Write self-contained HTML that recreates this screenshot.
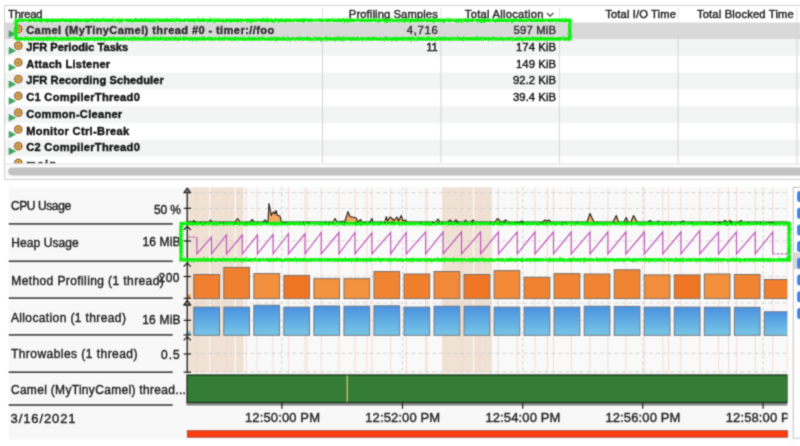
<!DOCTYPE html><html><head><meta charset="utf-8"><style>html,body{margin:0;padding:0;background:#fff;width:800px;height:446px;overflow:hidden}</style></head><body><svg width="800" height="446" viewBox="0 0 800 446" style="display:block;font-family:'Liberation Sans', sans-serif">
<defs><filter id="rough" x="-2%" y="-30%" width="104%" height="160%"><feTurbulence type="fractalNoise" baseFrequency="1.1" numOctaves="2" seed="7"/><feDisplacementMap in="SourceGraphic" scale="3.2"/></filter><linearGradient id="bg1" x1="0" y1="0" x2="0" y2="1"><stop offset="0" stop-color="#4a92e0"/><stop offset="1" stop-color="#78c6e6"/></linearGradient><radialGradient id="gear" cx="0.5" cy="0.5" r="0.5"><stop offset="0.25" stop-color="#9a948c"/><stop offset="0.38" stop-color="#d69a3a"/><stop offset="0.7" stop-color="#f0b83a"/><stop offset="1" stop-color="#b07030"/></radialGradient></defs>
<filter id="gb" x="0" y="0" width="800" height="446" filterUnits="userSpaceOnUse" color-interpolation-filters="sRGB"><feConvolveMatrix order="3" kernelMatrix="1 3 1 3 12 3 1 3 1" divisor="28" edgeMode="duplicate"/></filter>
<g filter="url(#gb)">
<rect x="0" y="0" width="800" height="446" fill="#ffffff"/>
<rect x="4.5" y="5.5" width="900" height="174" fill="#ffffff" stroke="#d0d0d0" stroke-width="1"/>
<clipPath id="tclip"><rect x="5" y="22" width="800" height="141.6"/></clipPath>
<g clip-path="url(#tclip)">
<rect x="5" y="22.50" width="800" height="16.75" fill="#d9d9d9"/>
<rect x="5" y="39.25" width="800" height="16.75" fill="#f3f4f4"/>
<rect x="5" y="56.00" width="800" height="16.75" fill="#ffffff"/>
<rect x="5" y="72.75" width="800" height="16.75" fill="#f3f4f4"/>
<rect x="5" y="89.50" width="800" height="16.75" fill="#ffffff"/>
<rect x="5" y="106.25" width="800" height="16.75" fill="#f3f4f4"/>
<rect x="5" y="123.00" width="800" height="16.75" fill="#ffffff"/>
<rect x="5" y="139.75" width="800" height="16.75" fill="#f3f4f4"/>
<rect x="5" y="156.50" width="800" height="16.75" fill="#ffffff"/>
<rect x="322.0" y="22" width="1" height="142" fill="#d4d4d4"/>
<rect x="440.5" y="22" width="1" height="142" fill="#d4d4d4"/>
<rect x="558.8" y="22" width="1" height="142" fill="#d4d4d4"/>
<rect x="677.6" y="22" width="1" height="142" fill="#d4d4d4"/>
<rect x="796.4" y="22" width="1" height="142" fill="#d4d4d4"/>
<path d="M8.9 30.50 L15.8 34.00 L8.9 37.50 Z" fill="#3ea55e" stroke="#3ea55e" stroke-width="0.4" stroke-linejoin="round"/>
<polygon points="23.00,28.90 22.05,30.12 22.10,31.66 20.62,32.09 19.75,33.37 18.30,32.85 16.85,33.37 15.98,32.09 14.50,31.66 14.55,30.12 13.60,28.90 14.55,27.68 14.50,26.14 15.98,25.71 16.85,24.43 18.30,24.95 19.75,24.43 20.62,25.71 22.10,26.14 22.05,27.68" fill="#8a5234"/>
<circle cx="18.3" cy="28.90" r="3.10" fill="#eeb43a"/>
<circle cx="18.3" cy="28.90" r="1.97" fill="#c48a3a"/>
<circle cx="18.3" cy="28.90" r="1.32" fill="#9a9592"/>
<text x="26.2" y="34.10" font-size="11.1" font-weight="700" fill="#2e2e2e" text-anchor="start" textLength="248" lengthAdjust="spacing" stroke="#2e2e2e" stroke-width="0.4">Camel (MyTinyCamel) thread #0 - timer://foo</text>
<text x="437.8" y="34.10" font-size="11.3" font-weight="400" fill="#2e2e2e" text-anchor="end" textLength="31" lengthAdjust="spacing" stroke="#2e2e2e" stroke-width="0.4">4,716</text>
<text x="556" y="34.10" font-size="11.3" font-weight="400" fill="#2e2e2e" text-anchor="end" textLength="42.5" lengthAdjust="spacing" stroke="#2e2e2e" stroke-width="0.4">597 MiB</text>
<path d="M8.9 47.25 L15.8 50.75 L8.9 54.25 Z" fill="#3ea55e" stroke="#3ea55e" stroke-width="0.4" stroke-linejoin="round"/>
<polygon points="23.00,45.65 22.05,46.87 22.10,48.41 20.62,48.84 19.75,50.12 18.30,49.60 16.85,50.12 15.98,48.84 14.50,48.41 14.55,46.87 13.60,45.65 14.55,44.43 14.50,42.89 15.98,42.46 16.85,41.18 18.30,41.70 19.75,41.18 20.62,42.46 22.10,42.89 22.05,44.43" fill="#8a5234"/>
<circle cx="18.3" cy="45.65" r="3.10" fill="#eeb43a"/>
<circle cx="18.3" cy="45.65" r="1.97" fill="#c48a3a"/>
<circle cx="18.3" cy="45.65" r="1.32" fill="#9a9592"/>
<text x="26.2" y="50.85" font-size="11.1" font-weight="700" fill="#111111" text-anchor="start" textLength="102" lengthAdjust="spacing" stroke="#111111" stroke-width="0.4">JFR Periodic Tasks</text>
<text x="437.8" y="50.85" font-size="11.3" font-weight="400" fill="#111111" text-anchor="end" textLength="11.5" lengthAdjust="spacing" stroke="#111111" stroke-width="0.4">11</text>
<text x="556" y="50.85" font-size="11.3" font-weight="400" fill="#111111" text-anchor="end" textLength="40" lengthAdjust="spacing" stroke="#111111" stroke-width="0.4">174 KiB</text>
<path d="M8.9 64.00 L15.8 67.50 L8.9 71.00 Z" fill="#3ea55e" stroke="#3ea55e" stroke-width="0.4" stroke-linejoin="round"/>
<polygon points="23.00,62.40 22.05,63.62 22.10,65.16 20.62,65.59 19.75,66.87 18.30,66.35 16.85,66.87 15.98,65.59 14.50,65.16 14.55,63.62 13.60,62.40 14.55,61.18 14.50,59.64 15.98,59.21 16.85,57.93 18.30,58.45 19.75,57.93 20.62,59.21 22.10,59.64 22.05,61.18" fill="#8a5234"/>
<circle cx="18.3" cy="62.40" r="3.10" fill="#eeb43a"/>
<circle cx="18.3" cy="62.40" r="1.97" fill="#c48a3a"/>
<circle cx="18.3" cy="62.40" r="1.32" fill="#9a9592"/>
<text x="26.2" y="67.60" font-size="11.1" font-weight="700" fill="#111111" text-anchor="start" textLength="84" lengthAdjust="spacing" stroke="#111111" stroke-width="0.4">Attach Listener</text>
<text x="556" y="67.60" font-size="11.3" font-weight="400" fill="#111111" text-anchor="end" textLength="40" lengthAdjust="spacing" stroke="#111111" stroke-width="0.4">149 KiB</text>
<path d="M8.9 80.75 L15.8 84.25 L8.9 87.75 Z" fill="#3ea55e" stroke="#3ea55e" stroke-width="0.4" stroke-linejoin="round"/>
<polygon points="23.00,79.15 22.05,80.37 22.10,81.91 20.62,82.34 19.75,83.62 18.30,83.10 16.85,83.62 15.98,82.34 14.50,81.91 14.55,80.37 13.60,79.15 14.55,77.93 14.50,76.39 15.98,75.96 16.85,74.68 18.30,75.20 19.75,74.68 20.62,75.96 22.10,76.39 22.05,77.93" fill="#8a5234"/>
<circle cx="18.3" cy="79.15" r="3.10" fill="#eeb43a"/>
<circle cx="18.3" cy="79.15" r="1.97" fill="#c48a3a"/>
<circle cx="18.3" cy="79.15" r="1.32" fill="#9a9592"/>
<text x="26.2" y="84.35" font-size="11.1" font-weight="700" fill="#111111" text-anchor="start" textLength="137.6" lengthAdjust="spacing" stroke="#111111" stroke-width="0.4">JFR Recording Scheduler</text>
<text x="556" y="84.35" font-size="11.3" font-weight="400" fill="#111111" text-anchor="end" textLength="43" lengthAdjust="spacing" stroke="#111111" stroke-width="0.4">92.2 KiB</text>
<path d="M8.9 97.50 L15.8 101.00 L8.9 104.50 Z" fill="#3ea55e" stroke="#3ea55e" stroke-width="0.4" stroke-linejoin="round"/>
<polygon points="23.00,95.90 22.05,97.12 22.10,98.66 20.62,99.09 19.75,100.37 18.30,99.85 16.85,100.37 15.98,99.09 14.50,98.66 14.55,97.12 13.60,95.90 14.55,94.68 14.50,93.14 15.98,92.71 16.85,91.43 18.30,91.95 19.75,91.43 20.62,92.71 22.10,93.14 22.05,94.68" fill="#8a5234"/>
<circle cx="18.3" cy="95.90" r="3.10" fill="#eeb43a"/>
<circle cx="18.3" cy="95.90" r="1.97" fill="#c48a3a"/>
<circle cx="18.3" cy="95.90" r="1.32" fill="#9a9592"/>
<text x="26.2" y="101.10" font-size="11.1" font-weight="700" fill="#111111" text-anchor="start" textLength="113.6" lengthAdjust="spacing" stroke="#111111" stroke-width="0.4">C1 CompilerThread0</text>
<text x="556" y="101.10" font-size="11.3" font-weight="400" fill="#111111" text-anchor="end" textLength="43" lengthAdjust="spacing" stroke="#111111" stroke-width="0.4">39.4 KiB</text>
<path d="M8.9 114.25 L15.8 117.75 L8.9 121.25 Z" fill="#3ea55e" stroke="#3ea55e" stroke-width="0.4" stroke-linejoin="round"/>
<polygon points="23.00,112.65 22.05,113.87 22.10,115.41 20.62,115.84 19.75,117.12 18.30,116.60 16.85,117.12 15.98,115.84 14.50,115.41 14.55,113.87 13.60,112.65 14.55,111.43 14.50,109.89 15.98,109.46 16.85,108.18 18.30,108.70 19.75,108.18 20.62,109.46 22.10,109.89 22.05,111.43" fill="#8a5234"/>
<circle cx="18.3" cy="112.65" r="3.10" fill="#eeb43a"/>
<circle cx="18.3" cy="112.65" r="1.97" fill="#c48a3a"/>
<circle cx="18.3" cy="112.65" r="1.32" fill="#9a9592"/>
<text x="26.2" y="117.85" font-size="11.1" font-weight="700" fill="#111111" text-anchor="start" textLength="96" lengthAdjust="spacing" stroke="#111111" stroke-width="0.4">Common-Cleaner</text>
<path d="M8.9 131.00 L15.8 134.50 L8.9 138.00 Z" fill="#3ea55e" stroke="#3ea55e" stroke-width="0.4" stroke-linejoin="round"/>
<polygon points="23.00,129.40 22.05,130.62 22.10,132.16 20.62,132.59 19.75,133.87 18.30,133.35 16.85,133.87 15.98,132.59 14.50,132.16 14.55,130.62 13.60,129.40 14.55,128.18 14.50,126.64 15.98,126.21 16.85,124.93 18.30,125.45 19.75,124.93 20.62,126.21 22.10,126.64 22.05,128.18" fill="#8a5234"/>
<circle cx="18.3" cy="129.40" r="3.10" fill="#eeb43a"/>
<circle cx="18.3" cy="129.40" r="1.97" fill="#c48a3a"/>
<circle cx="18.3" cy="129.40" r="1.32" fill="#9a9592"/>
<text x="26.2" y="134.60" font-size="11.1" font-weight="700" fill="#111111" text-anchor="start" textLength="103" lengthAdjust="spacing" stroke="#111111" stroke-width="0.4">Monitor Ctrl-Break</text>
<path d="M8.9 147.75 L15.8 151.25 L8.9 154.75 Z" fill="#3ea55e" stroke="#3ea55e" stroke-width="0.4" stroke-linejoin="round"/>
<polygon points="23.00,146.15 22.05,147.37 22.10,148.91 20.62,149.34 19.75,150.62 18.30,150.10 16.85,150.62 15.98,149.34 14.50,148.91 14.55,147.37 13.60,146.15 14.55,144.93 14.50,143.39 15.98,142.96 16.85,141.68 18.30,142.20 19.75,141.68 20.62,142.96 22.10,143.39 22.05,144.93" fill="#8a5234"/>
<circle cx="18.3" cy="146.15" r="3.10" fill="#eeb43a"/>
<circle cx="18.3" cy="146.15" r="1.97" fill="#c48a3a"/>
<circle cx="18.3" cy="146.15" r="1.32" fill="#9a9592"/>
<text x="26.2" y="151.35" font-size="11.1" font-weight="700" fill="#111111" text-anchor="start" textLength="113.6" lengthAdjust="spacing" stroke="#111111" stroke-width="0.4">C2 CompilerThread0</text>
<path d="M8.9 164.50 L15.8 168.00 L8.9 171.50 Z" fill="#3ea55e" stroke="#3ea55e" stroke-width="0.4" stroke-linejoin="round"/>
<polygon points="23.00,162.90 22.05,164.12 22.10,165.66 20.62,166.09 19.75,167.37 18.30,166.85 16.85,167.37 15.98,166.09 14.50,165.66 14.55,164.12 13.60,162.90 14.55,161.68 14.50,160.14 15.98,159.71 16.85,158.43 18.30,158.95 19.75,158.43 20.62,159.71 22.10,160.14 22.05,161.68" fill="#8a5234"/>
<circle cx="18.3" cy="162.90" r="3.10" fill="#eeb43a"/>
<circle cx="18.3" cy="162.90" r="1.97" fill="#c48a3a"/>
<circle cx="18.3" cy="162.90" r="1.32" fill="#9a9592"/>
<text x="26.2" y="168.10" font-size="11.1" font-weight="700" fill="#111111" text-anchor="start" textLength="30" lengthAdjust="spacing" stroke="#111111" stroke-width="0.4">main</text>
</g>
<rect x="5" y="6" width="900" height="16" fill="#ffffff"/>
<text x="8.1" y="17.8" font-size="11.2" font-weight="400" fill="#1a1a1a" text-anchor="start" textLength="34.4" lengthAdjust="spacing" stroke="#1a1a1a" stroke-width="0.4">Thread</text>
<text x="437.8" y="17.8" font-size="11.2" font-weight="400" fill="#1a1a1a" text-anchor="end" textLength="89" lengthAdjust="spacing" stroke="#1a1a1a" stroke-width="0.4">Profiling Samples</text>
<text x="543.4" y="17.8" font-size="11.2" font-weight="400" fill="#1a1a1a" text-anchor="end" textLength="78.6" lengthAdjust="spacing" stroke="#1a1a1a" stroke-width="0.4">Total Allocation</text>
<path d="M546.8 12.8 L550.1 16.1 L553.4 12.8" fill="none" stroke="#333" stroke-width="1.1"/>
<text x="675.9" y="17.8" font-size="11.2" font-weight="400" fill="#1a1a1a" text-anchor="end" textLength="70.6" lengthAdjust="spacing" stroke="#1a1a1a" stroke-width="0.4">Total I/O Time</text>
<text x="793.8" y="17.8" font-size="11.2" font-weight="400" fill="#1a1a1a" text-anchor="end" textLength="96.9" lengthAdjust="spacing" stroke="#1a1a1a" stroke-width="0.4">Total Blocked Time</text>
<rect x="322.0" y="8" width="1" height="13" fill="#dddddd"/>
<rect x="440.5" y="8" width="1" height="13" fill="#dddddd"/>
<rect x="558.8" y="8" width="1" height="13" fill="#dddddd"/>
<rect x="677.6" y="8" width="1" height="13" fill="#dddddd"/>
<rect x="796.4" y="8" width="1" height="13" fill="#dddddd"/>
<rect x="5" y="163.6" width="900" height="15.4" fill="#fbfbfb"/>
<rect x="5" y="163.5" width="900" height="1" fill="#e4e4e4"/>
<rect x="8.2" y="167.6" width="900" height="7.8" rx="3.9" fill="#c2c2c2"/>
<rect x="8.7" y="187.2" width="778.9" height="252.6" fill="#f8f8f8"/>
<rect x="187.3" y="187.5" width="600.3" height="217.5" fill="#f9f9f9"/>
<rect x="187.3" y="187.5" width="55.90" height="185" fill="#efe1d4"/>
<rect x="442.7" y="187.5" width="49.20" height="185" fill="#efe1d4"/>
<rect x="196.10" y="187.5" width="1.0" height="185" fill="#eedacd"/>
<rect x="211.00" y="187.5" width="1.0" height="185" fill="#eedacd"/>
<rect x="226.00" y="187.5" width="1.0" height="185" fill="#eedacd"/>
<rect x="241.80" y="187.5" width="1.0" height="185" fill="#eedacd"/>
<rect x="245.75" y="187.5" width="1.0" height="185" fill="#f6dcd0"/>
<rect x="256.40" y="187.5" width="1.0" height="185" fill="#f6dcd0"/>
<rect x="272.60" y="187.5" width="1.0" height="185" fill="#f6dcd0"/>
<rect x="288.00" y="187.5" width="1.0" height="185" fill="#f6dcd0"/>
<rect x="304.50" y="187.5" width="1.0" height="185" fill="#f6dcd0"/>
<rect x="306.40" y="187.5" width="1.0" height="185" fill="#f6dcd0"/>
<rect x="320.75" y="187.5" width="1.0" height="185" fill="#f6dcd0"/>
<rect x="338.50" y="187.5" width="1.0" height="185" fill="#f6dcd0"/>
<rect x="354.50" y="187.5" width="1.0" height="185" fill="#f6dcd0"/>
<rect x="366.40" y="187.5" width="1.0" height="185" fill="#f6dcd0"/>
<rect x="371.40" y="187.5" width="1.0" height="185" fill="#f6dcd0"/>
<rect x="390.10" y="187.5" width="1.0" height="185" fill="#f6dcd0"/>
<rect x="405.75" y="187.5" width="1.0" height="185" fill="#f6dcd0"/>
<rect x="425.10" y="187.5" width="1.0" height="185" fill="#f6dcd0"/>
<rect x="426.75" y="187.5" width="1.0" height="185" fill="#f6dcd0"/>
<rect x="442.60" y="187.5" width="1.0" height="185" fill="#eedacd"/>
<rect x="461.30" y="187.5" width="1.0" height="185" fill="#eedacd"/>
<rect x="479.60" y="187.5" width="1.0" height="185" fill="#eedacd"/>
<rect x="497.90" y="187.5" width="1.0" height="185" fill="#f6dcd0"/>
<rect x="516.75" y="187.5" width="1.0" height="185" fill="#f6dcd0"/>
<rect x="534.50" y="187.5" width="1.0" height="185" fill="#f6dcd0"/>
<rect x="547.00" y="187.5" width="1.0" height="185" fill="#f6dcd0"/>
<rect x="553.00" y="187.5" width="1.0" height="185" fill="#f6dcd0"/>
<rect x="570.75" y="187.5" width="1.0" height="185" fill="#f6dcd0"/>
<rect x="589.50" y="187.5" width="1.0" height="185" fill="#f6dcd0"/>
<rect x="607.40" y="187.5" width="1.0" height="185" fill="#f6dcd0"/>
<rect x="625.40" y="187.5" width="1.0" height="185" fill="#f6dcd0"/>
<rect x="643.90" y="187.5" width="1.0" height="185" fill="#f6dcd0"/>
<rect x="662.25" y="187.5" width="1.0" height="185" fill="#f6dcd0"/>
<rect x="668.00" y="187.5" width="1.0" height="185" fill="#f6dcd0"/>
<rect x="680.50" y="187.5" width="1.0" height="185" fill="#f6dcd0"/>
<rect x="699.25" y="187.5" width="1.0" height="185" fill="#f6dcd0"/>
<rect x="718.00" y="187.5" width="1.0" height="185" fill="#f6dcd0"/>
<rect x="728.00" y="187.5" width="1.0" height="185" fill="#f6dcd0"/>
<rect x="736.00" y="187.5" width="1.0" height="185" fill="#f6dcd0"/>
<rect x="754.75" y="187.5" width="1.0" height="185" fill="#f6dcd0"/>
<rect x="772.25" y="187.5" width="1.0" height="185" fill="#f6dcd0"/>
<rect x="786.80" y="187.5" width="1.0" height="185" fill="#f6dcd0"/>
<rect x="209.25" y="187.5" width="1.3" height="185" fill="#fbf8f5"/>
<rect x="234.75" y="187.5" width="1.3" height="185" fill="#fbf8f5"/>
<rect x="472.95000000000005" y="187.5" width="1.3" height="185" fill="#fbf8f5"/>
<line x1="281.9" y1="187.5" x2="281.9" y2="372.5" stroke="#cdcdcd" stroke-width="0.9" stroke-dasharray="3,3"/>
<line x1="402.5" y1="187.5" x2="402.5" y2="372.5" stroke="#cdcdcd" stroke-width="0.9" stroke-dasharray="3,3"/>
<line x1="522.75" y1="187.5" x2="522.75" y2="372.5" stroke="#cdcdcd" stroke-width="0.9" stroke-dasharray="3,3"/>
<line x1="642.75" y1="187.5" x2="642.75" y2="372.5" stroke="#cdcdcd" stroke-width="0.9" stroke-dasharray="3,3"/>
<line x1="763.1" y1="187.5" x2="763.1" y2="372.5" stroke="#cdcdcd" stroke-width="0.9" stroke-dasharray="3,3"/>
<line x1="187.3" y1="192.6" x2="787.6" y2="192.6" stroke="#d0d0d0" stroke-width="0.9" stroke-dasharray="4,3"/>
<line x1="187.3" y1="208.5" x2="787.6" y2="208.5" stroke="#d0d0d0" stroke-width="0.9" stroke-dasharray="4,3"/>
<line x1="187.3" y1="241.0" x2="787.6" y2="241.0" stroke="#d0d0d0" stroke-width="0.9" stroke-dasharray="4,3"/>
<line x1="187.3" y1="276.6" x2="787.6" y2="276.6" stroke="#d0d0d0" stroke-width="0.9" stroke-dasharray="4,3"/>
<line x1="187.3" y1="303.0" x2="787.6" y2="303.0" stroke="#d0d0d0" stroke-width="0.9" stroke-dasharray="4,3"/>
<line x1="187.3" y1="320.2" x2="787.6" y2="320.2" stroke="#d0d0d0" stroke-width="0.9" stroke-dasharray="4,3"/>
<line x1="187.3" y1="353.3" x2="787.6" y2="353.3" stroke="#d0d0d0" stroke-width="0.9" stroke-dasharray="4,3"/>
<line x1="187.3" y1="372.0" x2="787.6" y2="372.0" stroke="#d0d0d0" stroke-width="0.9" stroke-dasharray="4,3"/>
<polygon points="187.3,222.5 187.5,222 193,221.5 194,220.5 195,222 209,222 210.6,220 212,222 235,222 237.5,218.5 240,222 250,222 252.5,219.5 254,222 263,222 265,220 267,222 268,221 269,203.5 271.25,215.4 272.5,213 274,212 275,214 276,210.5 277.5,215.5 280,216 281.25,222 282,222 333,222 335,218.5 337,222 345,221 348,211.6 350,216.5 356.25,218 357.5,222 359,221 360.6,219.5 362,222 370,222 371.9,218.5 373,222 385,222 386.25,216.6 387.5,221 390,217 392.5,219 394,220.5 396.9,217 398.5,221 401.25,215.5 403,221 405.6,220 407,222 436,222 438,219 440,222 448,222 450,220 452,222 454,222 456,220 458,222 464,222 465.6,220 467,222 471,222 473,220 475,222 495,222 497.5,218.5 500,221 503,222 505.6,220 508,222 520,222 521.9,221 523,222 543,222 545,220 547,221 548.75,220 551,222 587,222 590,213.5 592.5,219 594,222 613,222 616.25,215.5 618.5,222 624,222 626.25,217.5 628,222 631,222 633.5,215.5 635.6,219 637,222 648,222 650,220.5 652,222 657,222 658.75,221 660,222 681,222 683,221 685,222 723,222 725,220.5 727,222 728,222 730,220.5 732,222 739,222 741,220.5 743,222 787.5,222 787.5,222.5" fill="#f4a865" stroke="#1e1e1e" stroke-width="1.1" stroke-linejoin="round"/>
<line x1="188.5" y1="237.2" x2="196.9" y2="237.2" stroke="#c058bc" stroke-width="1.2" stroke-dasharray="2.5,1.5"/>
<path d="M196.9 237.2 L196.9 253.8 L211.5 237.2 L211.5 253.8 L226.5 235 L226.5 253.8 L242.3 235 L242.3 253.8 L257.5 235 L257.5 253.8 L273.1 234.4 L273.1 253.8 L288.5 233.75 L288.5 253.8 L305 233.75 L305 253.8 L321.25 232.5 L321.25 253.8 L339 232.5 L339 253.8 L355 232.5 L355 253.8 L371.9 233 L371.9 253.8 L390.6 232.5 L390.6 253.8 L406.25 232.5 L406.25 253.8 L425.6 232 L425.6 253.8 L443.1 232 L443.1 253.8 L461.5 232 L461.5 253.8 L480.6 232 L480.6 253.8 L498.5 232 L498.5 253.8 L517.25 232 L517.25 253.8 L535 232 L535 253.8 L553.5 232 L553.5 253.8 L571.25 232 L571.25 253.8 L590 232 L590 253.8 L607.9 232 L607.9 253.8 L625.9 232 L625.9 253.8 L644.4 232 L644.4 253.8 L662.75 232 L662.75 253.8 L681 232 L681 253.8 L699.75 230.6 L699.75 253.8 L718.5 232 L718.5 253.8 L736.5 232 L736.5 253.8 L755.25 232 L755.25 253.8 L772.75 232 L772.75 253.8" fill="none" stroke="#c058bc" stroke-width="1.2" stroke-linejoin="miter"/>
<line x1="772.75" y1="253.8" x2="787.5" y2="253.8" stroke="#c058bc" stroke-width="1.2" stroke-dasharray="2.5,1.5"/>
<clipPath id="pclip"><rect x="187.3" y="180" width="600.3" height="266"/></clipPath>
<g clip-path="url(#pclip)">
<rect x="193.80" y="274.5" width="25.7" height="24.10" fill="#f0802f" stroke="#7a716a" stroke-width="1"/>
<rect x="193.80" y="307.1" width="25.7" height="28.20" fill="url(#bg1)" stroke="#6f7780" stroke-width="1"/>
<rect x="223.83" y="267.4" width="25.7" height="31.20" fill="#f0802f" stroke="#7a716a" stroke-width="1"/>
<rect x="223.83" y="307.1" width="25.7" height="28.20" fill="url(#bg1)" stroke="#6f7780" stroke-width="1"/>
<rect x="253.86" y="273.6" width="25.7" height="25.00" fill="#f2903d" stroke="#7a716a" stroke-width="1"/>
<rect x="253.86" y="305.25" width="25.7" height="30.05" fill="url(#bg1)" stroke="#6f7780" stroke-width="1"/>
<rect x="283.89" y="275.4" width="25.7" height="23.20" fill="#ef7624" stroke="#7a716a" stroke-width="1"/>
<rect x="283.89" y="307.1" width="25.7" height="28.20" fill="url(#bg1)" stroke="#6f7780" stroke-width="1"/>
<rect x="313.92" y="278.6" width="25.7" height="20.00" fill="#f3923f" stroke="#7a716a" stroke-width="1"/>
<rect x="313.92" y="306" width="25.7" height="29.30" fill="url(#bg1)" stroke="#6f7780" stroke-width="1"/>
<rect x="343.95" y="278.6" width="25.7" height="20.00" fill="#f3923f" stroke="#7a716a" stroke-width="1"/>
<rect x="343.95" y="306.2" width="25.7" height="29.10" fill="url(#bg1)" stroke="#6f7780" stroke-width="1"/>
<rect x="373.98" y="271.5" width="25.7" height="27.10" fill="#f08432" stroke="#7a716a" stroke-width="1"/>
<rect x="373.98" y="305.8" width="25.7" height="29.50" fill="url(#bg1)" stroke="#6f7780" stroke-width="1"/>
<rect x="404.01" y="274" width="25.7" height="24.60" fill="#f07f2c" stroke="#7a716a" stroke-width="1"/>
<rect x="404.01" y="307.1" width="25.7" height="28.20" fill="url(#bg1)" stroke="#6f7780" stroke-width="1"/>
<rect x="434.04" y="271.5" width="25.7" height="27.10" fill="#f2893a" stroke="#7a716a" stroke-width="1"/>
<rect x="434.04" y="306.2" width="25.7" height="29.10" fill="url(#bg1)" stroke="#6f7780" stroke-width="1"/>
<rect x="464.07" y="274.5" width="25.7" height="24.10" fill="#ef7624" stroke="#7a716a" stroke-width="1"/>
<rect x="464.07" y="306.2" width="25.7" height="29.10" fill="url(#bg1)" stroke="#6f7780" stroke-width="1"/>
<rect x="494.10" y="270.6" width="25.7" height="28.00" fill="#f28a38" stroke="#7a716a" stroke-width="1"/>
<rect x="494.10" y="307.1" width="25.7" height="28.20" fill="url(#bg1)" stroke="#6f7780" stroke-width="1"/>
<rect x="524.13" y="277.3" width="25.7" height="21.30" fill="#f08230" stroke="#7a716a" stroke-width="1"/>
<rect x="524.13" y="307.1" width="25.7" height="28.20" fill="url(#bg1)" stroke="#6f7780" stroke-width="1"/>
<rect x="554.16" y="273.6" width="25.7" height="25.00" fill="#f08432" stroke="#7a716a" stroke-width="1"/>
<rect x="554.16" y="307.1" width="25.7" height="28.20" fill="url(#bg1)" stroke="#6f7780" stroke-width="1"/>
<rect x="584.19" y="274" width="25.7" height="24.60" fill="#f08432" stroke="#7a716a" stroke-width="1"/>
<rect x="584.19" y="306.2" width="25.7" height="29.10" fill="url(#bg1)" stroke="#6f7780" stroke-width="1"/>
<rect x="614.22" y="269.8" width="25.7" height="28.80" fill="#f08432" stroke="#7a716a" stroke-width="1"/>
<rect x="614.22" y="306.4" width="25.7" height="28.90" fill="url(#bg1)" stroke="#6f7780" stroke-width="1"/>
<rect x="644.25" y="274.9" width="25.7" height="23.70" fill="#f28d3b" stroke="#7a716a" stroke-width="1"/>
<rect x="644.25" y="307.1" width="25.7" height="28.20" fill="url(#bg1)" stroke="#6f7780" stroke-width="1"/>
<rect x="674.28" y="274.9" width="25.7" height="23.70" fill="#ef7624" stroke="#7a716a" stroke-width="1"/>
<rect x="674.28" y="307.1" width="25.7" height="28.20" fill="url(#bg1)" stroke="#6f7780" stroke-width="1"/>
<rect x="704.31" y="274" width="25.7" height="24.60" fill="#f2903e" stroke="#7a716a" stroke-width="1"/>
<rect x="704.31" y="307.2" width="25.7" height="28.10" fill="url(#bg1)" stroke="#6f7780" stroke-width="1"/>
<rect x="734.34" y="274.5" width="25.7" height="24.10" fill="#f08432" stroke="#7a716a" stroke-width="1"/>
<rect x="734.34" y="307.3" width="25.7" height="28.00" fill="url(#bg1)" stroke="#6f7780" stroke-width="1"/>
<rect x="764.37" y="279.5" width="25.7" height="19.10" fill="#f07e2c" stroke="#7a716a" stroke-width="1"/>
<rect x="764.37" y="311.8" width="25.7" height="23.50" fill="url(#bg1)" stroke="#6f7780" stroke-width="1"/>
</g>
<rect x="187.8" y="294.6" width="2.6" height="3.6" fill="#f0802f"/>
<rect x="187.8" y="331.4" width="2.6" height="3.4" fill="#5aaee0"/>
<rect x="187.0" y="375.0" width="600.5999999999999" height="27.5" fill="#357d36" stroke="#1a331a" stroke-width="1.3"/>
<rect x="186.5" y="403.1" width="601.0999999999999" height="2.4" fill="#7e7e7e"/>
<rect x="346.6" y="375.5" width="1.3" height="26.3" fill="#cfc46a"/>
<line x1="187.2" y1="188.5" x2="187.2" y2="372.5" stroke="#1a1a1a" stroke-width="1.3"/>
<path d="M183.7 192.8 L187.2 188 L190.7 192.8 Z" fill="#777" stroke="#1a1a1a" stroke-width="1.1" stroke-linejoin="round"/>
<path d="M183.6 230.0 L187.2 226.4 L190.8 230.0" fill="none" stroke="#1a1a1a" stroke-width="1.2"/>
<path d="M183.6 266.6 L187.2 263 L190.8 266.6" fill="none" stroke="#1a1a1a" stroke-width="1.2"/>
<path d="M183.7 305.1 L187.2 300.3 L190.7 305.1 Z" fill="#777" stroke="#1a1a1a" stroke-width="1.1" stroke-linejoin="round"/>
<path d="M183.6 340.40000000000003 L187.2 336.8 L190.8 340.40000000000003" fill="none" stroke="#1a1a1a" stroke-width="1.2"/>
<line x1="183.6" y1="208.3" x2="191" y2="208.3" stroke="#1a1a1a" stroke-width="1.2"/>
<line x1="183.6" y1="241.0" x2="191" y2="241.0" stroke="#1a1a1a" stroke-width="1.2"/>
<line x1="183.6" y1="276.5" x2="191" y2="276.5" stroke="#1a1a1a" stroke-width="1.2"/>
<line x1="183.6" y1="298.3" x2="191" y2="298.3" stroke="#1a1a1a" stroke-width="1.2"/>
<line x1="183.6" y1="320.3" x2="191" y2="320.3" stroke="#1a1a1a" stroke-width="1.2"/>
<line x1="183.6" y1="334.9" x2="191" y2="334.9" stroke="#1a1a1a" stroke-width="1.2"/>
<line x1="183.6" y1="354.0" x2="191" y2="354.0" stroke="#1a1a1a" stroke-width="1.2"/>
<line x1="183.6" y1="372.2" x2="191" y2="372.2" stroke="#1a1a1a" stroke-width="1.2"/>
<rect x="281.29999999999995" y="403" width="1.2" height="5.8" fill="#222"/>
<rect x="401.9" y="403" width="1.2" height="5.8" fill="#222"/>
<rect x="522.15" y="403" width="1.2" height="5.8" fill="#222"/>
<rect x="642.15" y="403" width="1.2" height="5.8" fill="#222"/>
<rect x="762.5" y="403" width="1.2" height="5.8" fill="#222"/>
<text x="282.5" y="422.4" font-size="13" font-weight="400" fill="#262626" text-anchor="middle" textLength="75" lengthAdjust="spacing" stroke="#262626" stroke-width="0.4">12:50:00 PM</text>
<text x="402.7" y="422.4" font-size="13" font-weight="400" fill="#262626" text-anchor="middle" textLength="75" lengthAdjust="spacing" stroke="#262626" stroke-width="0.4">12:52:00 PM</text>
<text x="522.9" y="422.4" font-size="13" font-weight="400" fill="#262626" text-anchor="middle" textLength="75" lengthAdjust="spacing" stroke="#262626" stroke-width="0.4">12:54:00 PM</text>
<text x="642.9" y="422.4" font-size="13" font-weight="400" fill="#262626" text-anchor="middle" textLength="75" lengthAdjust="spacing" stroke="#262626" stroke-width="0.4">12:56:00 PM</text>
<text x="763.2" y="422.4" font-size="13" font-weight="400" fill="#262626" text-anchor="middle" textLength="75" lengthAdjust="spacing" stroke="#262626" stroke-width="0.4">12:58:00 PM</text>
<rect x="787.6" y="180" width="5.7" height="266" fill="#fdfdfd"/>
<rect x="187.3" y="430.7" width="600.3" height="6.5" fill="#ff3c12" stroke="#9a4030" stroke-width="0.8"/>
<rect x="8.7" y="223.1" width="164" height="1.6" fill="#404040"/>
<rect x="8.7" y="260.45" width="164" height="1.6" fill="#404040"/>
<rect x="8.7" y="297.3" width="164" height="1.6" fill="#404040"/>
<rect x="8.7" y="334.09999999999997" width="164" height="1.6" fill="#404040"/>
<rect x="8.7" y="371.4" width="164" height="1.6" fill="#404040"/>
<rect x="8.7" y="404.2" width="164" height="1.6" fill="#404040"/>
<text x="11.0" y="209.8" font-size="12" font-weight="400" fill="#1e1e1e" text-anchor="start" textLength="60.1" lengthAdjust="spacing" stroke="#1e1e1e" stroke-width="0.4">CPU Usage</text>
<text x="180.9" y="214" font-size="12" font-weight="400" fill="#1e1e1e" text-anchor="end" textLength="27" lengthAdjust="spacing" stroke="#1e1e1e" stroke-width="0.4">50 %</text>
<text x="11.3" y="247.4" font-size="12" font-weight="400" fill="#1e1e1e" text-anchor="start" textLength="67.4" lengthAdjust="spacing" stroke="#1e1e1e" stroke-width="0.4">Heap Usage</text>
<text x="180.5" y="246.3" font-size="12" font-weight="400" fill="#1e1e1e" text-anchor="end" textLength="38" lengthAdjust="spacing" stroke="#1e1e1e" stroke-width="0.4">16 MiB</text>
<text x="11.25" y="284.5" font-size="12" font-weight="400" fill="#1e1e1e" text-anchor="start" textLength="152.5" lengthAdjust="spacing" stroke="#1e1e1e" stroke-width="0.4">Method Profiling (1 thread)</text>
<text x="179.5" y="282" font-size="12" font-weight="400" fill="#1e1e1e" text-anchor="end" textLength="21" lengthAdjust="spacing" stroke="#1e1e1e" stroke-width="0.4">200</text>
<text x="10.9" y="321.6" font-size="12" font-weight="400" fill="#1e1e1e" text-anchor="start" textLength="115" lengthAdjust="spacing" stroke="#1e1e1e" stroke-width="0.4">Allocation (1 thread)</text>
<text x="180.6" y="323.75" font-size="12" font-weight="400" fill="#1e1e1e" text-anchor="end" textLength="38.4" lengthAdjust="spacing" stroke="#1e1e1e" stroke-width="0.4">16 MiB</text>
<text x="10.9" y="358.4" font-size="12" font-weight="400" fill="#1e1e1e" text-anchor="start" textLength="126.6" lengthAdjust="spacing" stroke="#1e1e1e" stroke-width="0.4">Throwables (1 thread)</text>
<text x="179.7" y="358.8" font-size="12" font-weight="400" fill="#1e1e1e" text-anchor="end" textLength="18.7" lengthAdjust="spacing" stroke="#1e1e1e" stroke-width="0.4">0.5</text>
<text x="10.9" y="393.8" font-size="12" font-weight="400" fill="#1e1e1e" text-anchor="start" textLength="175" lengthAdjust="spacing" stroke="#1e1e1e" stroke-width="0.4">Camel (MyTinyCamel) thread...</text>
<text x="10.6" y="422.6" font-size="13" font-weight="400" fill="#1e1e1e" text-anchor="start" textLength="65" lengthAdjust="spacing" stroke="#1e1e1e" stroke-width="0.4">3/16/2021</text>
<rect x="793.3" y="187.3" width="20" height="251" fill="#ffffff" stroke="#c8c8c8" stroke-width="1.1"/>
<rect x="793.9" y="252.6" width="10" height="16.8" fill="#dadada"/>
<rect x="797.1" y="191.00" width="12" height="11" rx="2.5" fill="#3a86f0"/>
<rect x="797.1" y="207.70" width="12" height="11" rx="2.5" fill="#3a86f0"/>
<rect x="797.1" y="224.40" width="12" height="11" rx="2.5" fill="#3a86f0"/>
<rect x="797.1" y="241.10" width="12" height="11" rx="2.5" fill="#3a86f0"/>
<rect x="797.1" y="257.80" width="12" height="11" rx="2.5" fill="#3a86f0"/>
<rect x="797.1" y="274.50" width="12" height="11" rx="2.5" fill="#3a86f0"/>
<rect x="797.1" y="291.20" width="12" height="11" rx="2.5" fill="#3a86f0"/>
<rect x="797.1" y="307.90" width="12" height="11" rx="2.5" fill="#3a86f0"/>
<rect x="15.9" y="20.3" width="553.85" height="18.6" fill="none" stroke="#10f010" stroke-width="3.5" filter="url(#rough)"/>
<rect x="181.0" y="223.6" width="608.1" height="36.3" fill="none" stroke="#10f010" stroke-width="3.5" filter="url(#rough)"/>
</g>
</svg></body></html>
